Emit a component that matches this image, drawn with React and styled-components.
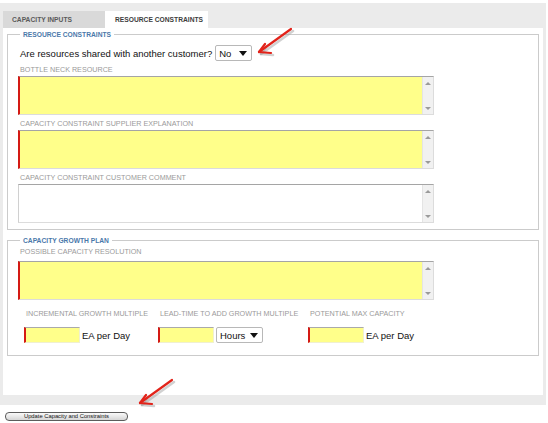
import React from 'react'
import styled, {createGlobalStyle} from 'styled-components'

const GlobalStyle = createGlobalStyle`
  body {
    margin: 0;
    background: #ffffff;
    font-family: "Liberation Sans", Arial, sans-serif;
  }
`

const Arrow = ({left, top}) => (
  <ArrowSvg width="42" height="34" viewBox="0 0 42 34" style={{left, top}}>
    <g stroke="#9a9a9a" strokeOpacity="0.45" strokeWidth="2.6" fill="none" strokeLinecap="round" strokeLinejoin="round">
      <line x1="38" y1="6" x2="6" y2="29" />
      <polyline points="12,21 6,29 18,30" />
    </g>
    <g stroke="#e2231a" strokeWidth="2.2" fill="none" strokeLinecap="round" strokeLinejoin="round">
      <line x1="36" y1="4" x2="4" y2="27" />
      <polyline points="10,19 4,27 16,28" />
    </g>
  </ArrowSvg>
)

const Memo = ({required}) => (
  <MemoBox $required={required}>
    <MemoField />
    <Scrollbar>
      <ScrollArrow $up />
      <ScrollArrow />
    </Scrollbar>
  </MemoBox>
)

const Dropdown = ({value, width}) => (
  <Select $width={width}>
    <span>{value}</span>
    <Caret />
  </Select>
)

const App = () => (
  <Page>
    <GlobalStyle />
    <Frame>
      <Tabs>
        <Tab>CAPACITY INPUTS</Tab>
        <Tab $active>RESOURCE CONSTRAINTS</Tab>
      </Tabs>
      <Panel>
        <Fieldset>
          <Legend>RESOURCE CONSTRAINTS</Legend>
          <QuestionRow>
            <Question>Are resources shared with another customer?</Question>
            <Dropdown value="No" width={37} />
          </QuestionRow>
          <FieldLabel>BOTTLE NECK RESOURCE</FieldLabel>
          <Memo required />
          <FieldLabel>CAPACITY CONSTRAINT SUPPLIER EXPLANATION</FieldLabel>
          <Memo required />
          <FieldLabel>CAPACITY CONSTRAINT CUSTOMER COMMENT</FieldLabel>
          <Memo />
        </Fieldset>

        <Fieldset $spaced>
          <Legend>CAPACITY GROWTH PLAN</Legend>
          <FieldLabel $first>POSSIBLE CAPACITY RESOLUTION</FieldLabel>
          <Memo required />
          <GrowthGrid>
            <FieldLabel $inline>INCREMENTAL GROWTH MULTIPLE</FieldLabel>
            <FieldLabel $inline>LEAD-TIME TO ADD GROWTH MULTIPLE</FieldLabel>
            <FieldLabel $inline>POTENTIAL MAX CAPACITY</FieldLabel>
            <InputCell>
              <SmallInput />
              <Unit>EA per Day</Unit>
            </InputCell>
            <InputCell>
              <SmallInput />
              <Dropdown value="Hours" width={47} />
            </InputCell>
            <InputCell>
              <SmallInput />
              <Unit>EA per Day</Unit>
            </InputCell>
          </GrowthGrid>
        </Fieldset>
      </Panel>
    </Frame>
    <UpdateButton>Update Capacity and Constraints</UpdateButton>

    <Arrow left={255} top={25} />
    <Arrow left={136} top={376} />
  </Page>
)
export default App

const Page = styled.div`
  position: relative;
  width: 548px;
  height: 423px;
  padding-top: 3px;
  box-sizing: border-box;
`

const Frame = styled.div`
  width: 546px;
  background: #ebebeb;
  padding: 8px 3px 10px;
  box-sizing: border-box;
`

const Tabs = styled.div`
  display: flex;
  height: 17px;
`

const Tab = styled.div`
  display: flex;
  align-items: center;
  width: ${p => p.$active ? '103px' : '102px'};
  padding-left: ${p => p.$active ? '10px' : '9px'};
  box-sizing: border-box;
  background: ${p => p.$active ? '#ffffff' : '#d9d9d9'};
  color: ${p => p.$active ? '#3c3c3c' : '#5a5a5a'};
  font-size: 6.7px;
  font-weight: bold;
  white-space: nowrap;
`

const Panel = styled.div`
  background: #ffffff;
  height: 367px;
  padding: 2px 4px 0;
  box-sizing: border-box;
`

const Fieldset = styled.fieldset`
  margin: ${p => p.$spaced ? '6px' : '0'} 0 0;
  padding: 0 5px ${p => p.$spaced ? '12px' : '6px'} 10px;
  border: 1px solid #cbcbcb;
  min-width: 0;
`

const Legend = styled.legend`
  margin-left: 2px;
  padding: 0 3px;
  font-size: 6.7px;
  line-height: 9px;
  font-weight: bold;
  color: #4a78aa;
`

const QuestionRow = styled.div`
  display: flex;
  align-items: center;
  gap: 3px;
  height: 16px;
  margin-top: 6px;
  padding-left: 2px;
`

const Question = styled.span`
  font-size: 9.5px;
  color: #111;
`

const Select = styled.div`
  display: flex;
  align-items: center;
  justify-content: space-between;
  width: ${p => p.$width}px;
  height: 16px;
  padding: 0 4px 0 3px;
  box-sizing: border-box;
  border: 1px solid #b8b8b8;
  border-radius: 2px;
  background: #ffffff;
  font-size: 9.5px;
  color: #111;
`

const Caret = styled.span`
  width: 0;
  height: 0;
  border-left: 4px solid transparent;
  border-right: 4px solid transparent;
  border-top: 5px solid #111;
`

const FieldLabel = styled.div`
  margin: ${p => p.$inline ? '0' : p.$first ? '3px 0 5px' : '5px 0 2px'};
  padding-left: 2px;
  font-size: 7.2px;
  line-height: 8px;
  color: #9a9a9a;
  white-space: nowrap;
`

const MemoBox = styled.div`
  display: flex;
  width: 416px;
  height: 39px;
  box-sizing: border-box;
  border: 1px solid #dcdcdc;
  border-top-color: #a5a5a5;
  border-left: ${p => p.$required ? '2px solid #d41a14' : '1px solid #d0d0d0'};
  background: ${p => p.$required ? '#ffff8a' : '#ffffff'};
`

const MemoField = styled.textarea`
  flex: 1;
  border: none;
  outline: none;
  resize: none;
  background: transparent;
  padding: 0;
`

const Scrollbar = styled.div`
  display: flex;
  flex-direction: column;
  justify-content: space-between;
  align-items: center;
  width: 11px;
  padding: 5px 0 4px;
  box-sizing: border-box;
  background: #f1f1f1;
  border-left: 1px solid #e4e4e4;
`

const ScrollArrow = styled.span`
  width: 0;
  height: 0;
  border-left: 3px solid transparent;
  border-right: 3px solid transparent;
  ${p => p.$up ? 'border-bottom: 3px solid #9a9a9a;' : 'border-top: 3px solid #9a9a9a;'}
`

const GrowthGrid = styled.div`
  display: grid;
  grid-template-columns: 134px 150px 1fr;
  row-gap: 9px;
  margin-top: 10px;
  padding-left: 6px;
`

const InputCell = styled.div`
  display: flex;
  align-items: center;
  gap: 2px;
  height: 16px;
`

const SmallInput = styled.div`
  width: 56px;
  height: 16px;
  box-sizing: border-box;
  background: #ffff8a;
  border: 1px solid #f0f0d0;
  border-top-color: #aaaaaa;
  border-left: 2px solid #d41a14;
`

const Unit = styled.span`
  font-size: 9.5px;
  color: #111;
`

const UpdateButton = styled.button`
  display: block;
  margin: 7px 0 0 5px;
  width: 123px;
  height: 9px;
  padding: 0;
  border: 1px solid #5c5c5c;
  border-radius: 4px;
  background: linear-gradient(#fafafa, #d6d6d6);
  font-family: "Liberation Sans", Arial, sans-serif;
  font-size: 5.8px;
  line-height: 7px;
  color: #111;
`

const ArrowSvg = styled.svg`
  position: absolute;
  pointer-events: none;
`
